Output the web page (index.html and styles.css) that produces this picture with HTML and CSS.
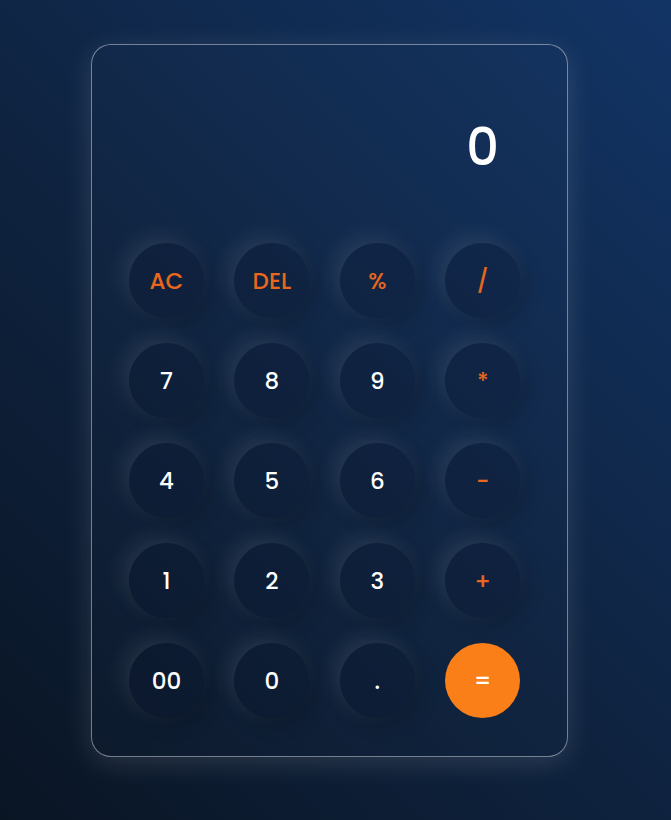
FILE: index.html
```html
<!DOCTYPE html>
<html lang="en">
<head>
<meta charset="UTF-8">
<title>Calculator</title>
<link rel="stylesheet" href="styles.css">
</head>
<body>
<main class="page">
  <section class="calculator">
    <div class="display">0</div>
    <div class="keys">
      <button class="key op">AC</button>
      <button class="key op">DEL</button>
      <button class="key op">%</button>
      <button class="key op">/</button>
      <button class="key">7</button>
      <button class="key">8</button>
      <button class="key">9</button>
      <button class="key op">*</button>
      <button class="key">4</button>
      <button class="key">5</button>
      <button class="key">6</button>
      <button class="key op">-</button>
      <button class="key">1</button>
      <button class="key">2</button>
      <button class="key">3</button>
      <button class="key op">+</button>
      <button class="key">00</button>
      <button class="key">0</button>
      <button class="key">.</button>
      <button class="key equal">=</button>
    </div>
  </section>
</main>
</body>
</html>
```
FILE: styles.css
```css
* { box-sizing: border-box; }
html, body { margin: 0; height: 100%; }
body {
  background: linear-gradient(45deg, #0a1524 0%, #0f2442 50%, #123465 100%);
  font-family: "Poppins", "Open Sans", "Liberation Sans", sans-serif;
  min-height: 820px;
}
.page {
  padding: 44px 0 0 91px;
}
.calculator {
  width: 477px;
  height: 713px;
  border: 1px solid rgba(200, 205, 215, 0.55);
  border-radius: 20px;
  background: rgba(255, 255, 255, 0.01);
  box-shadow: 0 6px 28px rgba(255, 255, 255, 0.13);
  padding-left: 37px;
}
.display {
  height: 198px;
  padding-top: 77px;
  padding-right: 68px;
  text-align: right;
  font-size: 51px;
  line-height: 1;
  font-weight: 500;
  color: #ffffff;
}
.keys {
  display: grid;
  grid-template-columns: repeat(4, 75px);
  grid-auto-rows: 75px;
  column-gap: 30.4px;
  row-gap: 25px;
}
.key {
  width: 75px;
  height: 75px;
  border: none;
  border-radius: 50%;
  padding: 0;
  background: rgba(8, 20, 40, 0.22);
  box-shadow: -6px -6px 22px rgba(255, 255, 255, 0.1), 6px 6px 20px rgba(0, 0, 0, 0.2);
  color: #ffffff;
  font-family: inherit;
  font-size: 23px;
  font-weight: 500;
  display: flex;
  align-items: center;
  justify-content: center;
}
.key.op { color: #e9661e; }
.key.equal {
  background: #fb7f18;
  color: #ffffff;
  box-shadow: none;
}
```
